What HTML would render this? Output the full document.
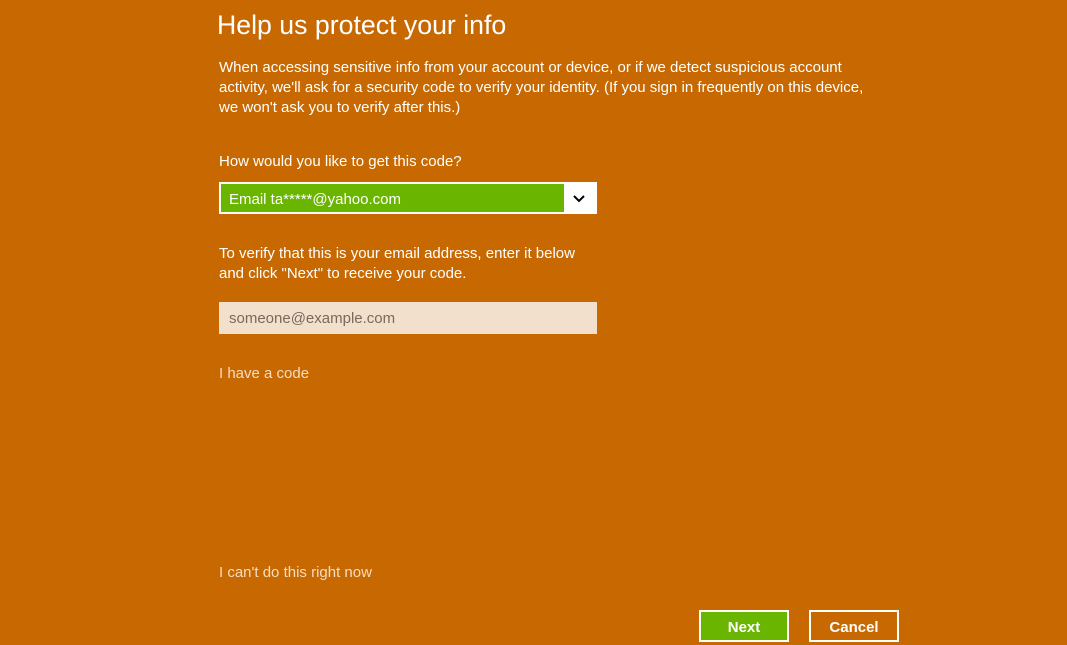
<!DOCTYPE html>
<html><head><style>
body{margin:0;width:1067px;height:645px;background:#c76800;font-family:"Liberation Sans",sans-serif;color:#fff;position:relative;overflow:hidden}
.a{position:absolute;white-space:nowrap}
h1{position:absolute;left:217px;top:10px;margin:0;font-weight:normal;font-size:26.7px}
.p{font-size:15px;line-height:20px}
.l{color:#f6dcc0;font-size:15px}
.dd{position:absolute;left:219px;top:182px;width:374px;height:28px;border:2px solid #fff;background:#6ab500}
.dd .w{position:absolute;right:0;top:0;width:31px;height:28px;background:#fff}
.in{position:absolute;left:219px;top:302px;width:378px;height:32px;background:#f2dfcc;color:#7a6a5c;font-size:15px;line-height:34px;text-indent:10px}
.b{position:absolute;top:610px;width:86px;height:28px;border:2px solid #fff;font-weight:bold;font-size:15px;text-align:center;line-height:31px}
</style></head><body>
<h1>Help us protect your info</h1>
<div class="a p" style="left:219px;top:58px">When accessing sensitive info from your account or device, or if we detect suspicious account<br>activity, we'll ask for a security code to verify your identity. (If you sign in frequently on this device,<br>we won't ask you to verify after this.)</div>
<div class="a p" style="left:219px;top:152px">How would you like to get this code?</div>
<div class="dd"><span class="a" style="left:8px;top:7px;font-size:15px">Email ta*****@yahoo.com</span><div class="w"><svg width="31" height="28"><path d="M10 12l5 5 5-5" stroke="#000" stroke-width="2" fill="none"/></svg></div></div>
<div class="a p" style="left:219px;top:244px">To verify that this is your email address, enter it below<br>and click "Next" to receive your code.</div>
<div class="in">someone@example.com</div>
<div class="a l" style="left:219px;top:365px">I have a code</div>
<div class="a l" style="left:219px;top:564px">I can't do this right now</div>
<div class="b" style="left:699px;background:#6ab500">Next</div>
<div class="b" style="left:809px">Cancel</div>
</body></html>
